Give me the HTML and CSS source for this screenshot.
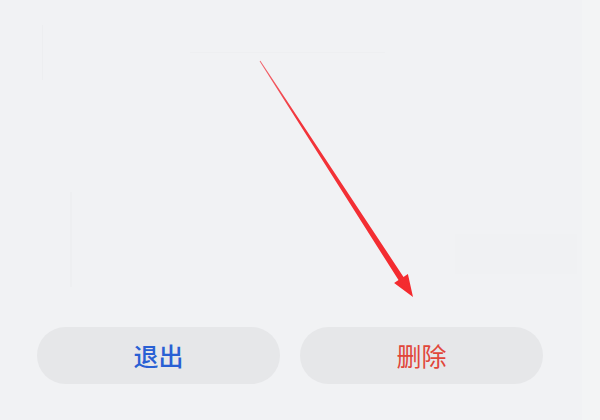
FILE: index.html
```html
<!DOCTYPE html>
<html lang="zh">
<head>
<meta charset="utf-8">
<title>删除</title>
<link rel="stylesheet" href="styles.css">
</head>
<body>
<div class="page">
  <div class="ghost ghost-a"></div>
  <div class="ghost ghost-b"></div>
  <div class="ghost ghost-c"></div>
  <div class="ghost ghost-d"></div>
  <div class="edge"></div>
  <svg class="arrow" width="600" height="420" viewBox="0 0 600 420">
    <defs>
      <linearGradient id="ag" x1="260" y1="61" x2="413" y2="297" gradientUnits="userSpaceOnUse">
        <stop offset="0" stop-color="#f06a72"/>
        <stop offset="0.25" stop-color="#f2343a"/>
        <stop offset="1" stop-color="#f42a2e"/>
      </linearGradient>
    </defs>
    <polygon fill="url(#ag)" points="260.4,60.7 403.5,276.9 407.9,274 413,297 394.1,283 398.5,280.1 259.6,61.3"/>
  </svg>
  <div class="actions">
    <button class="btn btn-exit">退出</button>
    <button class="btn btn-delete">删除</button>
  </div>
</div>
</body>
</html>
```

FILE: styles.css
```css
html, body {
  margin: 0;
  padding: 0;
}
body {
  background: #f1f2f4;
  font-family: "Noto Sans CJK SC", "Noto Sans", sans-serif;
}
.page {
  position: relative;
  width: 600px;
  height: 420px;
  overflow: hidden;
  display: flex;
  flex-direction: column;
  justify-content: flex-end;
  box-sizing: border-box;
  padding: 0 57px 36px 37px;
}
.ghost {
  position: absolute;
}
.ghost-a {
  left: 42px; top: 25px; width: 1px; height: 55px;
  background: rgba(0,0,0,0.015);
}
.ghost-b {
  left: 190px; top: 52px; width: 195px; height: 1px;
  background: rgba(0,0,0,0.01);
}
.ghost-c {
  left: 70px; top: 192px; width: 2px; height: 95px;
  background: rgba(0,0,0,0.012);
}
.ghost-d {
  left: 455px; top: 234px; width: 122px; height: 40px;
  background: rgba(0,0,0,0.004);
}
.edge {
  position: absolute;
  right: 0; top: 0;
  width: 18px; height: 420px;
  background: #f3f4f5;
}
.arrow {
  position: absolute;
  left: 0; top: 0;
}
.actions {
  position: relative;
  display: flex;
  gap: 20px;
}
.btn {
  flex: 1;
  height: 57px;
  border: none;
  border-radius: 28.5px;
  background: #e6e7e9;
  font-family: "Noto Sans CJK SC", "Noto Sans", sans-serif;
  font-size: 25px;
  line-height: 1;
  padding: 0;
}
.btn-exit {
  color: #2960d4;
  font-weight: 500;
}
.btn-delete {
  color: #e1463a;
  font-weight: 400;
}
```
